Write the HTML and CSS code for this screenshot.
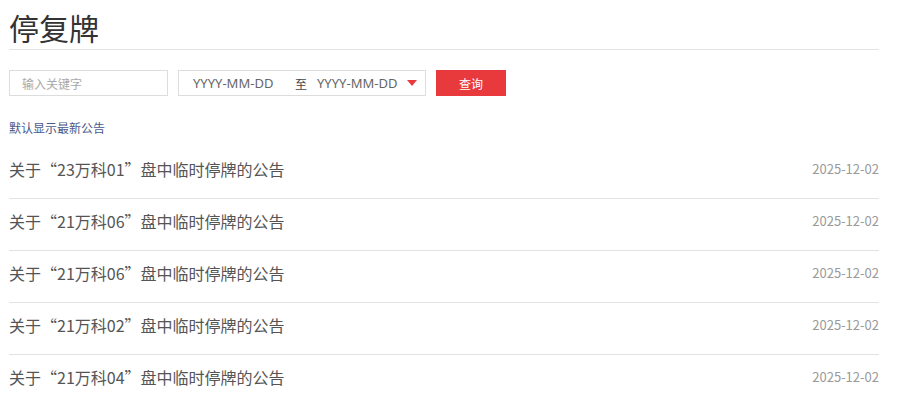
FILE: index.html
```html
<!DOCTYPE html>
<html lang="zh-CN">
<head>
<meta charset="utf-8">
<title>停复牌</title>
<link rel="stylesheet" href="styles.css">
</head>
<body>
<div class="page">
  <h1 class="title">停复牌</h1>
  <div class="search">
    <div class="keyword"><span class="ph">输入关键字</span></div>
    <div class="dates">
      <span class="date">YYYY-MM-DD</span>
      <span class="to">至</span>
      <span class="date">YYYY-MM-DD</span>
      <span class="tri"></span>
    </div>
    <button class="btn">查询</button>
  </div>
  <a class="hint" href="#">默认显示最新公告</a>
  <ul class="list">
    <li><span class="t">关于“23万科01”盘中临时停牌的公告</span><span class="d">2025-12-02</span></li>
    <li><span class="t">关于“21万科06”盘中临时停牌的公告</span><span class="d">2025-12-02</span></li>
    <li><span class="t">关于“21万科06”盘中临时停牌的公告</span><span class="d">2025-12-02</span></li>
    <li><span class="t">关于“21万科02”盘中临时停牌的公告</span><span class="d">2025-12-02</span></li>
    <li><span class="t">关于“21万科04”盘中临时停牌的公告</span><span class="d">2025-12-02</span></li>
  </ul>
</div>
</body>
</html>
```
FILE: styles.css
```css
* { box-sizing: border-box; }
body {
  margin: 0;
  background: #fff;
  font-family: "Noto Sans CJK SC", "Noto Sans", sans-serif;
  color: #555;
}
.page {
  width: 870px;
  margin-left: 9px;
}
.title {
  margin: 0;
  padding-top: 8px;
  padding-bottom: 3px;
  font-size: 30px;
  line-height: 38px;
  font-weight: 400;
  color: #333;
  border-bottom: 1px solid #e3e3e3;
}
.search {
  display: flex;
  gap: 10px;
  margin-top: 20px;
  height: 26px;
}
.keyword {
  width: 159px;
  border: 1px solid #ddd;
  display: flex;
  align-items: center;
  padding-left: 12px;
  font-size: 12px;
}
.ph { color: #aaa; }
.dates {
  width: 248px;
  border: 1px solid #ddd;
  display: flex;
  align-items: center;
  padding-left: 14px;
  font-size: 12px;
  color: #666;
}
.date {
  font-family: "Noto Sans", "Noto Sans CJK SC", sans-serif;
  font-size: 13px;
  width: 80px;
  white-space: nowrap;
}
.to { margin: 0 10px 0 22px; color: #444; }
.tri {
  margin-left: 10px;
  width: 0;
  height: 0;
  border-left: 5px solid transparent;
  border-right: 5px solid transparent;
  border-top: 6px solid #e8393c;
}
.btn {
  width: 70px;
  border: 0;
  background: #e8393c;
  color: #fff;
  font-family: inherit;
  font-size: 12px;
  padding: 0;
}
.hint {
  display: block;
  margin-top: 22px;
  font-size: 12px;
  line-height: 20px;
  color: #4a5a8a;
  text-decoration: none;
}
.list {
  list-style: none;
  margin: 9px 0 0;
  padding: 0;
}
.list li {
  display: flex;
  justify-content: space-between;
  align-items: center;
  padding: 11px 0 18px;
  line-height: 22px;
  border-bottom: 1px solid #e3e3e3;
}
.t { font-size: 16px; color: #555; }
.d { font-size: 13px; color: #999; }
```
